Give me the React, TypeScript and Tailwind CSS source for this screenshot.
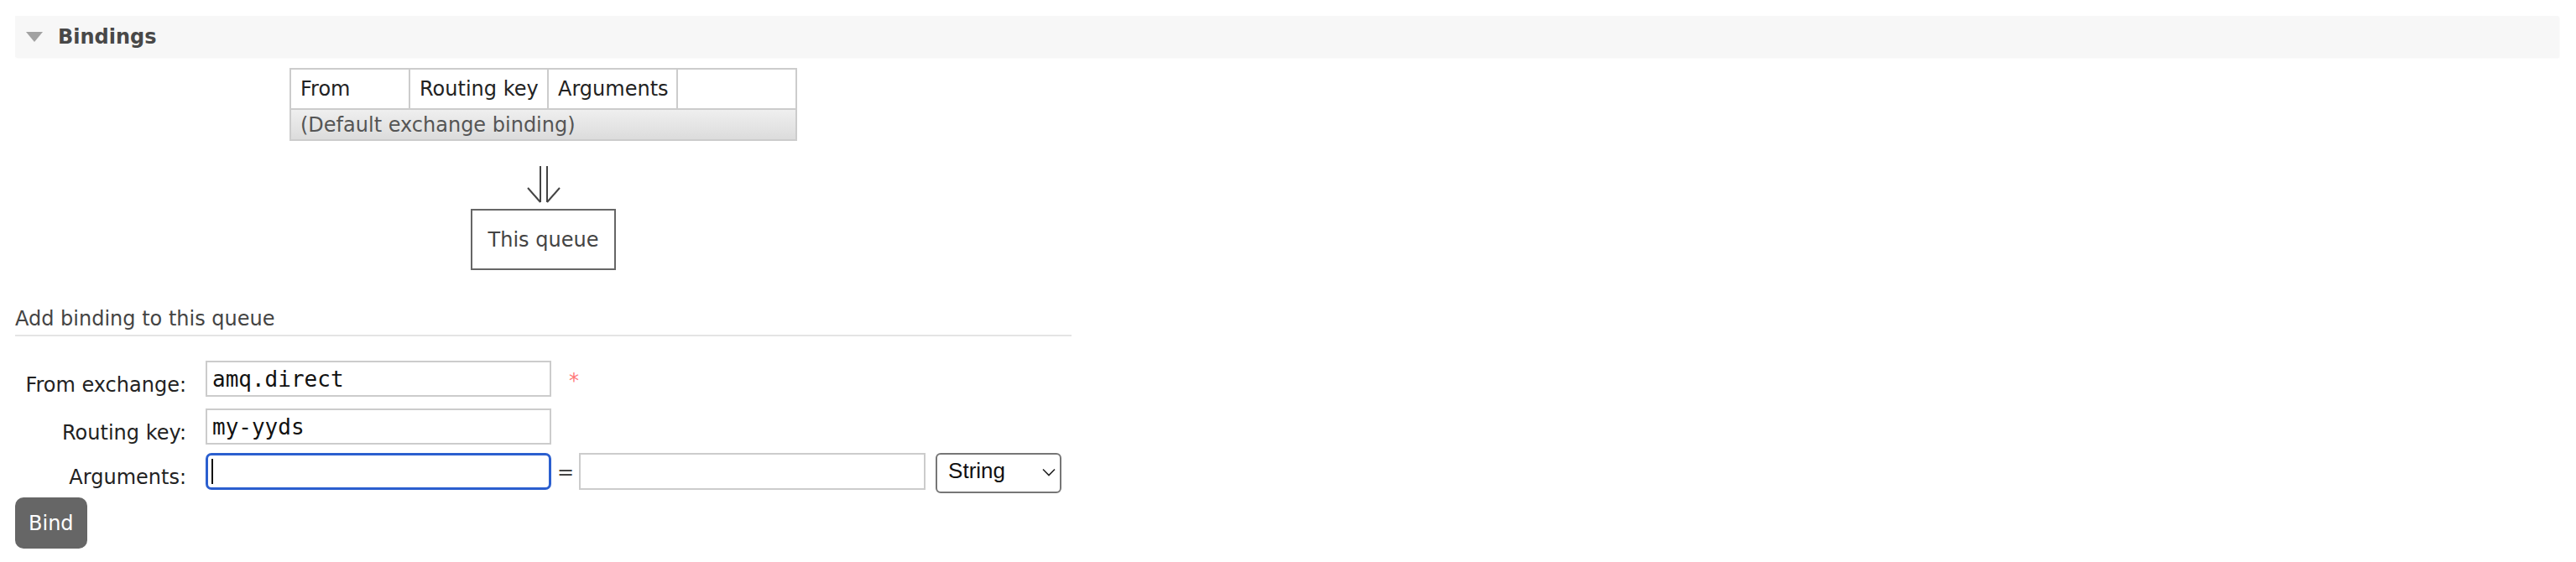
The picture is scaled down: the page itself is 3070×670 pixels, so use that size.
import React from 'react';

const Row: React.FC<{ label: string; children: React.ReactNode; className?: string }> = ({ label, children, className }) => (
  <div className={`flex items-start ${className ?? ''}`}>
    <div className="w-[204px] mr-[23px] h-[43px] flex items-end justify-end leading-[28px] text-[#222]">{label}</div>
    {children}
  </div>
);

export default function App() {
  return (
    <div className="w-[3070px] h-[670px] overflow-hidden bg-white font-['DejaVu_Sans',Verdana,sans-serif] text-[24px] text-[#444]">
      {/* section header */}
      <div className="ml-[18px] mr-[21px] mt-[19px] h-[49px] bg-[#f7f7f7] flex items-center pl-[13px] shadow-[1px_1px_2px_rgba(0,0,0,0.05)]">
        <svg width="20" height="12" viewBox="0 0 20 12" className="mr-[18px] shrink-0">
          <polygon points="0,0 20,0 10,12" fill="#a2a2a2" />
        </svg>
        <span className="font-bold text-[#484848] leading-[28px]">Bindings</span>
      </div>

      {/* bindings diagram */}
      <div className="ml-[18px] w-[1259px] flex flex-col items-center">
        <div className="mt-[13px] w-[605px] border-2 border-[#cccccc]">
          <div className="flex h-[48px] border-b-2 border-[#cccccc] text-[#222] leading-[28px]">
            <div className="w-[142px] border-r-2 border-[#cccccc] pl-[11px] flex items-center">From</div>
            <div className="w-[165px] border-r-2 border-[#cccccc] pl-[11px] flex items-center">Routing key</div>
            <div className="w-[154px] border-r-2 border-[#cccccc] pl-[11px] flex items-center">Arguments</div>
            <div className="w-[140px]"></div>
          </div>
          <div className="h-[35px] pl-[11px] flex items-center bg-linear-to-b from-[#efefef] to-[#dcdcdc] text-[#555] leading-[28px]">
            (Default exchange binding)
          </div>
        </div>
        <svg width="40" height="48" viewBox="0 0 40 48" className="mt-[28px]">
          <g stroke="#444" strokeWidth="2" fill="none">
            <line x1="16" y1="2" x2="16" y2="45" />
            <line x1="24" y1="2" x2="24" y2="45" />
            <line x1="1" y1="28" x2="16" y2="45" />
            <line x1="39" y1="28" x2="24" y2="45" />
          </g>
        </svg>
        <div className="mt-[5px] h-[73px] px-[19px] border-2 border-[#666] flex items-center text-[#444] leading-[28px]">
          This queue
        </div>
      </div>

      {/* add binding form */}
      <div className="mt-[44px] ml-[18px] w-[1259px] pb-[5px] border-b-2 border-[#e4e4e4] leading-[28px] text-[#444]">
        Add binding to this queue
      </div>

      <div className="mt-[29px] ml-[18px]">
        <Row label="From exchange:">
          <input
            readOnly
            value="amq.direct"
            className="w-[412px] h-[43px] border-2 border-[#cccccc] bg-white pl-[6px] font-['DejaVu_Sans_Mono',monospace] text-[26px] text-[#111] outline-none"
          />
          <span className="ml-[21px] mt-[10px] leading-[28px] text-[#ff7a7a]">*</span>
        </Row>
        <Row label="Routing key:" className="mt-[14px]">
          <input
            readOnly
            value="my-yyds"
            className="w-[412px] h-[43px] border-2 border-[#cccccc] bg-white pl-[6px] font-['DejaVu_Sans_Mono',monospace] text-[26px] text-[#111] outline-none"
          />
        </Row>
        <Row label="Arguments:" className="mt-[10px]">
          <div className="flex items-start">
            <div className="relative">
              <input
                defaultValue=""
                className="w-[412px] h-[44px] border-[3px] border-[#2b5fcf] rounded-[7px] bg-white pl-[4px] font-['DejaVu_Sans_Mono',monospace] text-[26px] text-[#111] outline-none"
              />
              {/* text caret */}
              <span className="absolute left-[7px] top-[7px] w-[2px] h-[30px] bg-[#111] pointer-events-none"></span>
            </div>
            <span className="ml-[7px] mr-[6px] mt-[9px] leading-[28px] text-[#444]">=</span>
            <input
              defaultValue=""
              className="w-[413px] h-[44px] border-2 border-[#cccccc] bg-white pl-[6px] font-['DejaVu_Sans_Mono',monospace] text-[26px] text-[#111] outline-none"
            />
            <div className="relative ml-[12px]">
              <select
                defaultValue="String"
                className="appearance-none w-[150px] h-[48px] border-2 border-[#767676] rounded-[6px] bg-white pl-[13px] pb-[5px] font-['Liberation_Sans',Arial,sans-serif] text-[26px] text-[#111] outline-none"
              >
                <option>String</option>
                <option>Number</option>
                <option>Boolean</option>
                <option>List</option>
              </select>
              <svg width="16" height="10" viewBox="0 0 16 10" className="absolute left-[127px] top-[18px] pointer-events-none">
                <polyline points="1,1.5 8,8.5 15,1.5" fill="none" stroke="#222" strokeWidth="1.6" />
              </svg>
            </div>
          </div>
        </Row>
        <button className="mt-[5px] h-[61px] px-[16px] rounded-[10px] bg-[#666] text-white leading-[28px]">Bind</button>
      </div>
    </div>
  );
}
